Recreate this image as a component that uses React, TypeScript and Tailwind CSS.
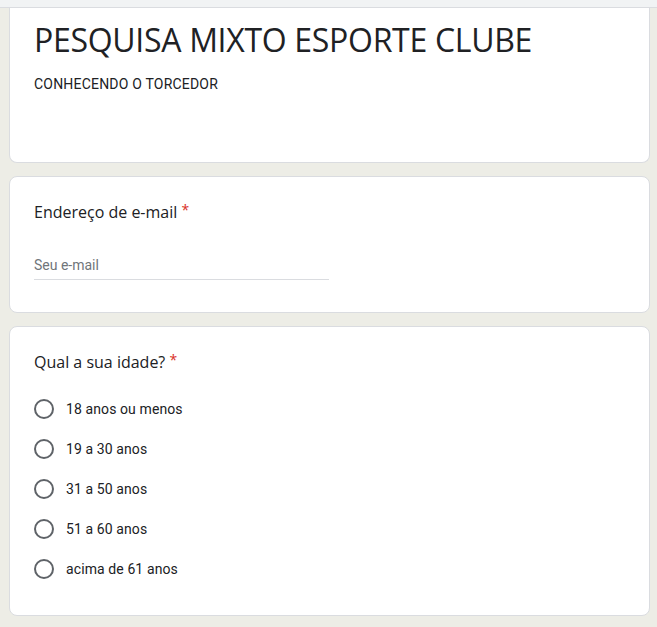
const options = [
  "18 anos ou menos",
  "19 a 30 anos",
  "31 a 50 anos",
  "51 a 60 anos",
  "acima de 61 anos",
];

function Card({ children, className = "" }: { children: React.ReactNode; className?: string }) {
  return (
    <div className={`bg-white border border-[#dadce0] rounded-lg px-6 ${className}`}>
      {children}
    </div>
  );
}

export default function App() {
  return (
    <div className="min-h-[627px] bg-[#edede6] font-['Roboto',sans-serif] text-[#202124]">
      <div className="h-[8px] bg-[#f1f3f4] border-b border-[#dadce0]" />
      <div className="pl-[9px] pr-[7px] flex flex-col gap-[13px] pb-[12px]">
        <div className="bg-white border border-[#dadce0] border-t-0 rounded-b-lg px-6 pt-[12px] h-[155px]">
          <h1 className="font-['Open_Sans',sans-serif] text-[32px] leading-[40px] tracking-[-0.3px]">
            PESQUISA MIXTO ESPORTE CLUBE
          </h1>
          <p className="text-sm tracking-[0.2px] mt-[14px]">CONHECENDO O TORCEDOR</p>
        </div>

        <Card className="pt-[23px] h-[137px]">
          <div className="font-['Open_Sans',sans-serif] text-[16px] leading-6">
            Endereço de e-mail <span className="text-[#d93025] text-sm align-top">*</span>
          </div>
          <div className="mt-[31px] w-[295px] border-b border-[#dadce0] pb-[4px] text-sm text-[#70757a]">
            Seu e-mail
          </div>
        </Card>

        <Card className="pt-[23px] pb-[36px]">
          <div className="font-['Open_Sans',sans-serif] text-[16px] leading-6">
            Qual a sua idade? <span className="text-[#d93025] text-sm align-top">*</span>
          </div>
          <div className="mt-[25px] flex flex-col gap-[20px]">
            {options.map((o) => (
              <label key={o} className="flex items-center gap-3 h-5">
                <span className="w-5 h-5 rounded-full border-2 border-[#5f6368]" />
                <span className="text-sm tracking-[0.1px]">{o}</span>
              </label>
            ))}
          </div>
        </Card>
      </div>
    </div>
  );
}
